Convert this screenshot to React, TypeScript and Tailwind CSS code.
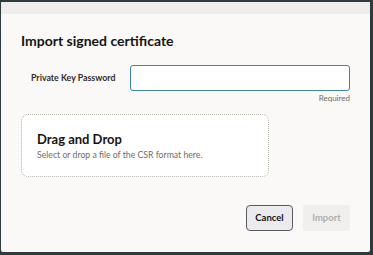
export default function App() {
  return (
    <div
      className="h-[255px] w-[373px] overflow-hidden bg-[#2e3a3d] pl-[1px] pr-[3px] pt-[2px] pb-[3px]"
      style={{ fontFamily: 'Lato, "Noto Sans", "Liberation Sans", sans-serif' }}
    >
      <div className="flex h-full w-full flex-col rounded-[2px] bg-[#faf9f8]">
        <div className="h-[12px] w-full bg-[#eeedeb]" />
        <div className="flex flex-1 flex-col px-[20px] pt-[17px]">
          <h1 className="text-[14px] font-bold leading-[20px] text-[#161513]">Import signed certificate</h1>

          <div className="mt-[14px] flex items-start">
            <label className="w-[110px] pl-[10px] pt-[6px] text-[8.8px] font-bold text-[#312d2a]">
              Private Key Password
            </label>
            <div className="flex flex-1 flex-col">
              <input
                type="password"
                className="h-[26px] w-[220px] rounded-[3px] border-[1.5px] border-[#3a87a3] bg-white px-2 text-[10px] outline-none"
              />
              <span className="mt-[1px] w-[220px] text-right text-[8px] text-[#6f6c69]">Required</span>
            </div>
          </div>

          <div className="mt-[10px] flex h-[63px] w-[248px] flex-col justify-center rounded-[7px] border border-dotted border-[#b8b5b1] bg-white pl-[15px]">
            <div className="text-[13px] font-bold leading-[18px] text-[#161513]">Drag and Drop</div>
            <div className="mt-[1px] text-[8.7px] leading-[12px] text-[#6f6c69]">
              Select or drop a file of the CSR format here.
            </div>
          </div>

          <div className="mt-[28px] flex justify-end gap-[10px]">
            <button className="h-[26px] w-[47px] rounded-[4px] border border-[#5b5a5e] bg-[#ebeaee] text-[9.5px] font-bold text-[#161513]">
              Cancel
            </button>
            <button className="h-[26px] w-[47px] rounded-[3px] bg-[#f0efed] text-[9.5px] font-bold text-[#b0aeaa]">
              Import
            </button>
          </div>
        </div>
      </div>
    </div>
  );
}
